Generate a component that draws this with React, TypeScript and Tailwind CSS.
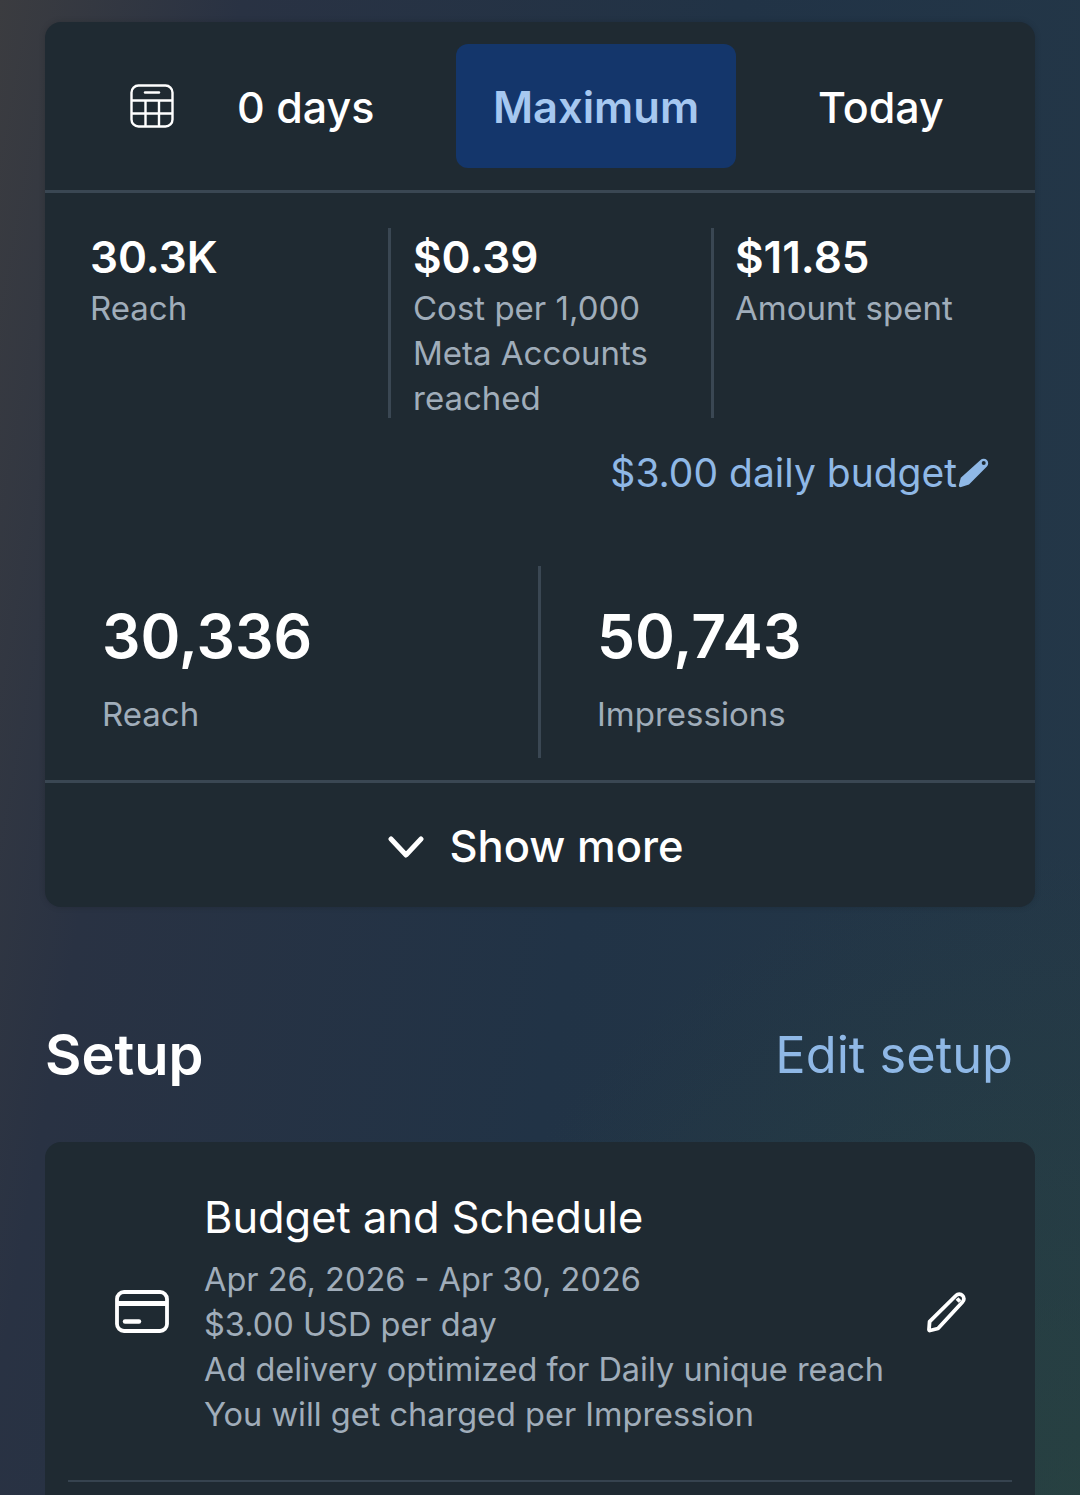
function CalendarIcon() {
  return (
    <svg width="44" height="44" viewBox="0 0 44 44" fill="none" stroke="white" strokeWidth="2.4">
      <rect x="1.5" y="1.5" width="41" height="41" rx="7" />
      <path d="M1.5 16.5h41M1.5 29.5h41M15.5 16.5v26M29 16.5v26" />
      <path d="M15 8.5h14" strokeWidth="2.4" strokeLinecap="round" />
    </svg>
  );
}

function PencilSolid() {
  return (
    <svg width="32" height="32" viewBox="0 0 32 32" className="shrink-0">
      <path d="M23.5 3a4.6 4.6 0 0 1 6.4 0 4.6 4.6 0 0 1 0 6.4L12 27.5l-7.8 2.6c-1.2.4-2.6-.7-2.3-2l1.9-7.4z" fill="#8fb8e6" />
      <circle cx="26.7" cy="6" r="2" fill="#1e2a32" />
    </svg>
  );
}

function CardIcon() {
  return (
    <svg width="54" height="44" viewBox="0 0 54 44" fill="none" stroke="white" strokeWidth="3.8">
      <rect x="2" y="2" width="50" height="39" rx="7" />
      <path d="M2 13.5h50" strokeWidth="5" />
      <path d="M10 31.5h14" strokeLinecap="round" strokeWidth="4.4" />
    </svg>
  );
}

function PencilOutline() {
  return (
    <svg width="42" height="42" viewBox="0 0 42 42" fill="none" stroke="white" strokeWidth="3.8" strokeLinejoin="round">
      <path d="M30 3.5a4.5 4.5 0 0 1 6.5 0 4.5 4.5 0 0 1 0 6.5L12 36.5l-8 2c-.6.1-1-.3-1-.9l.6-8z" />
      <path d="M31 6.5l3 3" />
    </svg>
  );
}

function Chevron() {
  return (
    <svg width="36" height="24" viewBox="0 0 36 24" fill="none" stroke="white" strokeWidth="5" strokeLinecap="round" strokeLinejoin="round">
      <path d="M3 4l15 16L33 4" />
    </svg>
  );
}

function Stat({ value, label }: { value: string; label: string }) {
  return (
    <div className="min-w-0 pt-[1px]">
      <div className="text-[44px] leading-[57px] font-semibold text-white">{value}</div>
      <div className="text-[33px] leading-[45px] text-[#a0adba]">{label}</div>
    </div>
  );
}

export default function App() {
  return (
    <div className="h-[1495px] w-[1080px] overflow-hidden bg-[radial-gradient(circle_at_100%_100%,rgba(42,72,60,0.55),transparent_35%),linear-gradient(100deg,#3b3c40_0%,#293243_18%,#213346_55%,#243848_100%)] px-[45px] pt-[22px] font-['Inter',sans-serif]">
      <section className="h-[885px] rounded-2xl bg-[#1f2a32] shadow-[0_0_6px_rgba(0,0,0,0.15)]">
        <div className="flex h-[171px] items-center border-b-[3px] border-[#3a4753] text-[43px] font-medium text-white">
          <div className="ml-[85px] flex w-[44px] justify-center">
            <CalendarIcon />
          </div>
          <span className="ml-[63px] w-[135px] pt-[3px] whitespace-nowrap">0 days</span>
          <button className="ml-[84px] h-[124px] w-[280px] rounded-xl bg-[#14366b] pt-[3px] text-[43.5px] font-semibold text-[#a6c8f0]">
            Maximum
          </button>
          <span className="ml-[82px] pt-[3px]">Today</span>
        </div>

        <div className="mt-[35px] grid h-[190px] grid-cols-[343px_323px_1fr] grid-rows-[190px]">
          <div className="pl-[45px]">
            <Stat value="30.3K" label="Reach" />
          </div>
          <div className="border-l-[3px] border-[#3a4753] pl-[22px]">
            <Stat value="$0.39" label="Cost per 1,000 Meta Accounts reached" />
          </div>
          <div className="border-l-[3px] border-[#3a4753] pl-[21px]">
            <Stat value="$11.85" label="Amount spent" />
          </div>
        </div>

        <div className="mt-[28px] flex items-center justify-end pr-[46px] text-[39px] leading-[54px] text-[#8fb8e6]">
          $3.00 daily budget
          <PencilSolid />
        </div>

        <div className="mt-[66px] grid h-[192px] grid-cols-[493px_1fr]">
          <div className="pl-[57px] pt-[30px]">
            <div className="text-[60.5px] leading-[80px] font-semibold text-white">30,336</div>
            <div className="mt-[16px] text-[33px] leading-[45px] text-[#a0adba]">Reach</div>
          </div>
          <div className="border-l-[3px] border-[#3a4753] pl-[56px] pt-[30px]">
            <div className="text-[60.5px] leading-[80px] font-semibold text-white">50,743</div>
            <div className="mt-[16px] text-[33px] leading-[45px] text-[#a0adba]">Impressions</div>
          </div>
        </div>

        <div className="mt-[22px] flex h-[126px] items-center justify-center gap-[26px] border-t-[3px] border-[#3a4753] pt-[5px] pr-[9px] text-[43.5px] font-medium text-white">
          <Chevron />
          Show more
        </div>
      </section>

      <div className="mt-[112px] flex items-center justify-between pr-[22px]">
        <h2 className="text-[56px] leading-[72px] font-semibold text-white">Setup</h2>
        <span className="text-[50.5px] leading-[70px] text-[#8fb8e6]">Edit setup</span>
      </div>

      <section className="mt-[51px] h-[400px] rounded-2xl bg-[#1f2a32] px-[23px]">
        <div className="flex h-[340px] items-center border-b-[2px] border-[#36434f]">
          <div className="ml-[47px] w-[54px] shrink-0 pt-[2px]">
            <CardIcon />
          </div>
          <div className="ml-[35px] min-w-0 flex-1 pt-[2px]">
            <div className="text-[43.4px] leading-[60px] text-white">Budget and Schedule</div>
            <div className="mt-[10px] text-[32.5px] leading-[45px] text-[#a0adba]">
              <div>Apr 26, 2026 - Apr 30, 2026</div>
              <div>$3.00 USD per day</div>
              <div>Ad delivery optimized for Daily unique reach</div>
              <div>You will get charged per Impression</div>
            </div>
          </div>
          <div className="mr-[44px] shrink-0 pt-[4px]">
            <PencilOutline />
          </div>
        </div>
      </section>
    </div>
  );
}
